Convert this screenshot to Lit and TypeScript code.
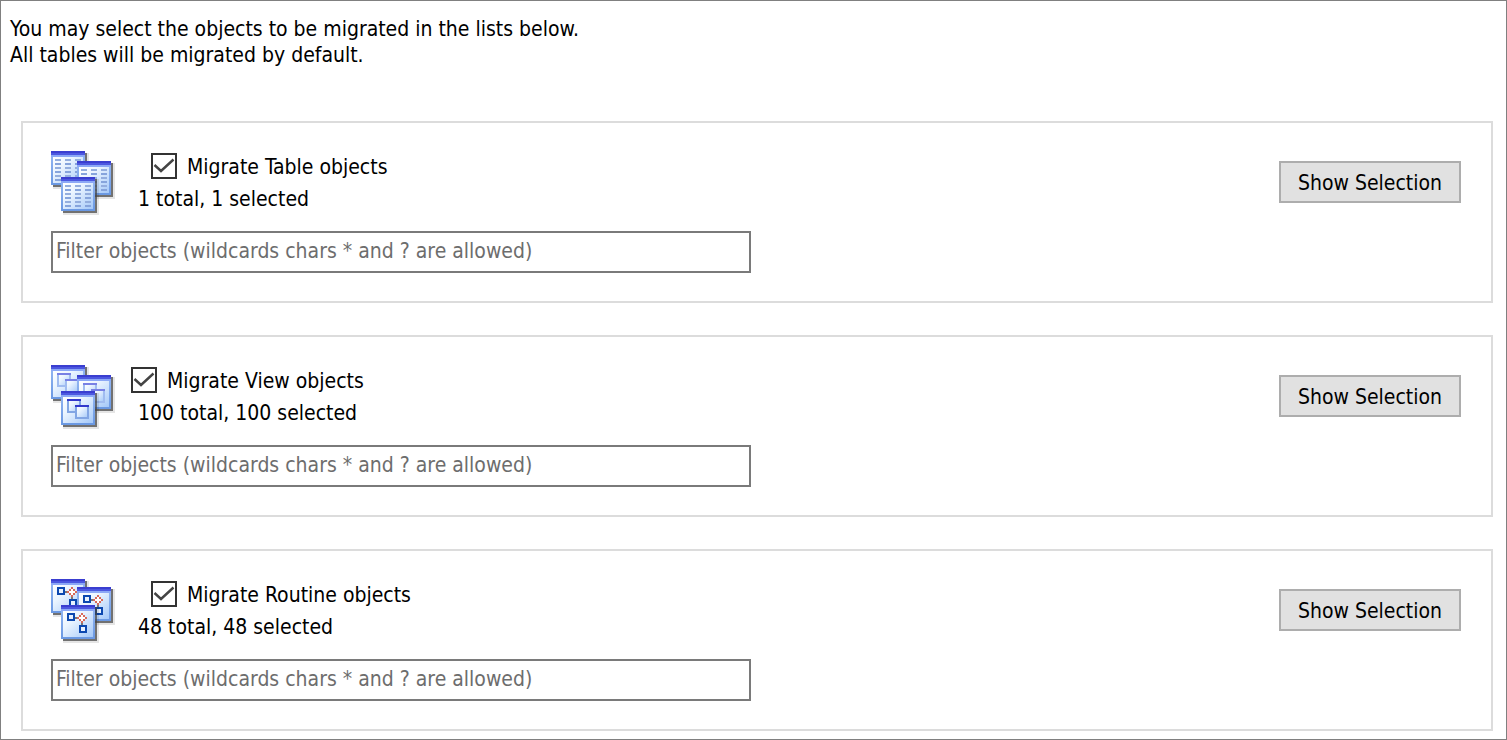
import { LitElement, html, svg, css } from "lit";
import { customElement, property } from "lit/decorators.js";
import { classMap } from "lit/directives/class-map.js";

type Kind = "table" | "view" | "routine";

const range = (n: number) => Array.from({ length: n }, (_, i) => i);

@customElement("object-icon")
class ObjectIcon extends LitElement {
  @property() kind: Kind = "table";

  static styles = css`
    :host {
      display: block;
      width: 64px;
      height: 64px;
    }
    svg {
      display: block;
      width: 100%;
      height: 100%;
    }
  `;

  private content(front: boolean) {
    if (this.kind === "table") {
      return range(6).map((r) =>
        [2, 7, 12].map(
          (x) => svg`<rect x=${x} y=${4 + r * 2} width="3" height="1" fill=${r % 2 ? "#86a4dc" : "#94aede"}/>`
        )
      );
    }
    if (this.kind === "view") {
      const top = front ? "#3238cc" : "#7880e4";
      const side = front ? "#82a6e4" : "#a0bcf0";
      return [
        [3, 4],
        [7, 7],
      ].map(
        ([x, y]) => svg`
          <rect x=${x + 0.5} y=${y + 0.5} width="6" height="6" fill="url(#pane)" stroke=${side}/>
          <rect x=${x} y=${y} width="7" height="1" fill=${top}/>`
      );
    }
    return svg`
      <rect x="7" y="6" width="1" height="1" fill="#777"/>
      <rect x="10" y="9" width="1" height="1" fill="#777"/>
      <rect x="3.5" y="4.5" width="3" height="3" fill="#e8f2ff" stroke="#0c48b0"/>
      <path d="M10 4h1v1h1v1h1v1h-1v1h-1v1h-1v-1h-1v-1h-1v-1h1v-1h1z" fill="#d86a5a"/>
      <rect x="10" y="5" width="1" height="3" fill="#fff"/>
      <rect x="9" y="6" width="3" height="1" fill="#fff"/>
      <rect x="9.5" y="10.5" width="3" height="3" fill="#e8f2ff" stroke="#0c48b0"/>`;
  }

  private pane(x: number, y: number, front = false) {
    return svg`
      <g transform="translate(${x} ${y})">
        <rect x="1" y="1" width="18" height="18" fill="#000" opacity="0.1"/>
        <rect x="1" y="1" width="17" height="17" fill="#444" opacity="0.72"/>
        <rect width="17" height="17" fill="url(#edge)"/>
        <rect x="1" y="3" width="15" height="13" fill="url(#pane)"/>
        <rect width="17" height="1" fill="#3a3ed0"/>
        <rect y="1" width="17" height="1" fill="#4c58e0"/>
        <rect y="2" width="17" height="1" fill="#8ca8f6"/>
        ${this.content(front)}
      </g>`;
  }

  render() {
    const secondTop = this.kind === "routine" ? 4 : 5;
    return html`<svg viewBox="0 0 32 32" shape-rendering="crispEdges" aria-hidden="true">
      <defs>
        <linearGradient id="pane" x1="0" y1="0" x2="1" y2="1">
          <stop offset="0" stop-color="#ffffff" />
          <stop offset="0.35" stop-color="#eaf4ff" />
          <stop offset="1" stop-color="#a4c8f8" />
        </linearGradient>
        <linearGradient id="edge" x1="0" y1="0" x2="0" y2="1">
          <stop offset="0" stop-color="#98baf4" />
          <stop offset="1" stop-color="#6a98e2" />
        </linearGradient>
      </defs>
      ${this.pane(0, 0)} ${this.pane(13, secondTop)} ${this.pane(5, 13, true)}
    </svg>`;
  }
}

@customElement("object-group")
class ObjectGroup extends LitElement {
  @property() kind: Kind = "table";
  @property() label = "";
  @property({ type: Number }) total = 0;
  @property({ type: Boolean }) indented = false;

  static styles = css`
    :host {
      display: block;
    }
    .card {
      display: grid;
      gap: 16px;
      padding: 28px 30px 28px 28px;
      border: 2px solid #dcdcdc;
    }
    .head {
      display: flex;
      align-items: flex-start;
      gap: 16px;
    }
    .info {
      flex: 1;
      line-height: 32px;
    }
    .option {
      display: flex;
      gap: 10px;
      height: 32px;
    }
    .option.indented {
      padding-left: 20px;
    }
    .box {
      display: grid;
      width: 26px;
      height: 26px;
      margin-top: 2px;
    }
    .box > * {
      grid-area: 1 / 1;
    }
    input[type="checkbox"] {
      appearance: none;
      box-sizing: border-box;
      width: 26px;
      height: 26px;
      margin: 0;
      border: 2px solid #333;
      background: #fff;
    }
    .tick {
      width: 26px;
      height: 26px;
      pointer-events: none;
      visibility: hidden;
    }
    input:checked + .tick {
      visibility: visible;
    }
    .count {
      padding-left: 7px;
    }
    button,
    .filter {
      box-sizing: border-box;
      height: 42px;
      font: inherit;
      border-radius: 0;
    }
    button {
      width: 182px;
      margin: 10px 0 0;
      padding: 2px 0 0;
      border: 2px solid #adadad;
      background: #e1e1e1;
      color: #000;
    }
    .filter {
      width: 100%;
      max-width: 700px;
      margin: 0;
      padding: 0 3px 2px;
      border: 2px solid #7a7a7a;
      background: #fff;
      color: #000;
    }
    .filter::placeholder {
      color: #6d6d6d;
      opacity: 1;
    }
  `;

  render() {
    return html`<section class="card">
      <div class="head">
        <object-icon .kind=${this.kind}></object-icon>
        <div class="info">
          <div class=${classMap({ option: true, indented: this.indented })}>
            <span class="box">
              <input type="checkbox" id="migrate" checked />
              <svg class="tick" viewBox="0 0 26 26" aria-hidden="true">
                <path d="M3.500 12l6.500 6L22.500 6.500" fill="none" stroke="#444" stroke-width="2.400" />
              </svg>
            </span>
            <label for="migrate">${this.label}</label>
          </div>
          <div class="count">${this.total} total, ${this.total} selected</div>
        </div>
        <button type="button">Show Selection</button>
      </div>
      <input
        class="filter"
        type="text"
        aria-label="Filter objects"
        placeholder="Filter objects (wildcards chars * and ? are allowed)"
      />
    </section>`;
  }
}

@customElement("app-root")
class AppRoot extends LitElement {
  static styles = css`
    :host {
      display: block;
      box-sizing: border-box;
      min-height: 100vh;
      padding: 15px 13px 8px 9px;
      border: 1px solid #808080;
      background: #fff;
      color: #000;
      font-family: "DejaVu Sans Condensed", "DejaVu Sans", sans-serif;
      font-size: 21px;
      line-height: 26px;
    }
    .intro {
      margin: 0 0 53px;
    }
    .groups {
      display: grid;
      gap: 32px;
      padding-left: 11px;
    }
  `;

  render() {
    return html`
      <p class="intro">
        You may select the objects to be migrated in the lists below.<br />
        All tables will be migrated by default.
      </p>
      <main class="groups">
        <object-group kind="table" label="Migrate Table objects" .total=${1} indented></object-group>
        <object-group kind="view" label="Migrate View objects" .total=${100}></object-group>
        <object-group kind="routine" label="Migrate Routine objects" .total=${48} indented></object-group>
      </main>
    `;
  }
}
